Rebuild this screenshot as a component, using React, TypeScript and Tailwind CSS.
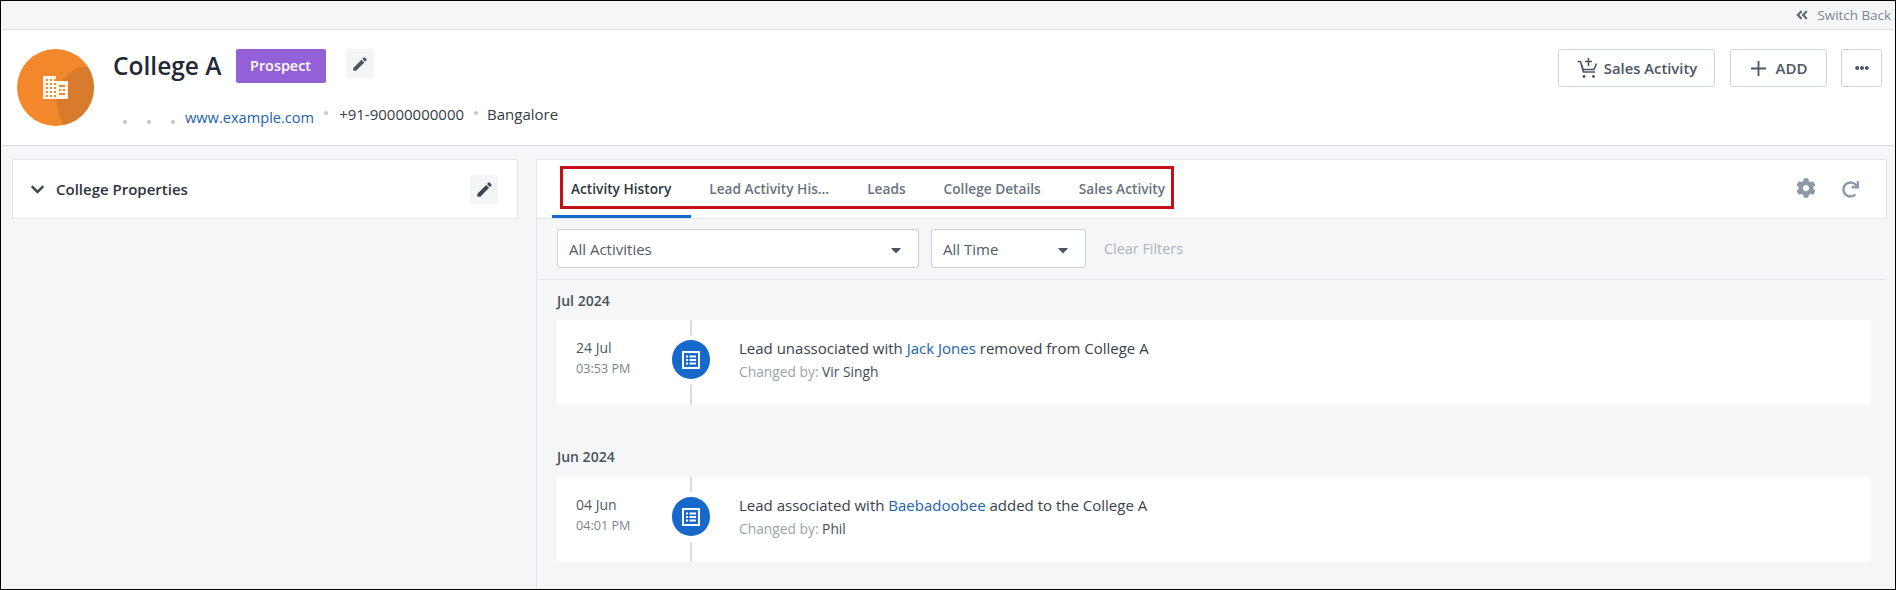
import React from "react";
import { FaAngleDoubleLeft, FaCaretDown, FaChevronDown, FaCog, FaEllipsisH, FaRedo } from "react-icons/fa";
import { MdEdit } from "react-icons/md";

function Avatar() {
  return (
    <svg width="77" height="77" viewBox="0 0 77 77" className="shrink-0">
      <defs>
        <clipPath id="av"><circle cx="38.5" cy="38.5" r="38.5" /></clipPath>
      </defs>
      <circle cx="38.5" cy="38.5" r="38.5" fill="#f2882b" />
      <g clipPath="url(#av)">
        <path d="M62 18 C50 24 42 32 40 44 C38 56 42 68 48 80 L80 80 L80 18 Z" fill="#d97b2c" />
      </g>
      <path d="M26 27 H39 V32 H51 V50 H26 Z" fill="#fff8ef" />
      <g fill="#f2882b">
        {[29, 33, 37].map((x) =>
          [30, 34, 38, 42, 46].map((y) => <rect key={`${x}-${y}`} x={x} y={y} width="2" height="2" />)
        )}
        <rect x="42" y="36" width="6" height="2" />
        <rect x="42" y="40" width="2" height="2" />
        <rect x="46" y="40" width="2" height="2" />
        <rect x="42" y="44" width="6" height="2" />
      </g>
    </svg>
  );
}

function CartPlus() {
  return (
    <svg width="23" height="22" viewBox="0 0 22 22" fill="none" stroke="#4b5563" strokeWidth="1.6">
      <path d="M1 4.5 H4 L7 15 H18.5" />
      <path d="M5 8 L6.5 12.5 H17.5 L20 6.5" />
      <path d="M12 1 V9 M8.5 4.5 H15.5" />
      <circle cx="7.5" cy="19.5" r="1.4" fill="#4b5563" stroke="none" />
      <circle cx="17" cy="19.5" r="1.4" fill="#4b5563" stroke="none" />
    </svg>
  );
}

function ListIcon() {
  return (
    <svg width="18" height="18" viewBox="0 0 18 18" fill="none">
      <rect x="1" y="1" width="16" height="16" stroke="#fff" strokeWidth="2" />
      <g fill="#fff">
        <rect x="4" y="4.5" width="2" height="2" />
        <rect x="7.5" y="4.5" width="6.5" height="2" />
        <rect x="4" y="8" width="2" height="2" />
        <rect x="7.5" y="8" width="6.5" height="2" />
        <rect x="4" y="11.5" width="2" height="2" />
        <rect x="7.5" y="11.5" width="6.5" height="2" />
      </g>
    </svg>
  );
}

function Tab({ label, active, className }: { label: string; active?: boolean; className: string }) {
  return (
    <span className={`text-[13.7px] font-semibold whitespace-nowrap ${active ? "text-[#2c3541]" : "text-[#68737f]"} ${className}`}>
      {label}
    </span>
  );
}

function Entry({
  day,
  time,
  before,
  link,
  after,
  by,
}: {
  day: string;
  time: string;
  before: string;
  link: string;
  after: string;
  by: string;
}) {
  return (
    <div className="flex h-[85px] mr-[16px] ml-[20px] bg-white shrink-0">
      <div className="w-[115px] pl-[19px] pt-[18px] text-[#4f5964]">
        <div className="h-[20px] leading-[20px] text-[14px]">{day}</div>
        <div className="h-[20px] mt-[1px] leading-[20px] text-[12.6px] text-[#7a848e]">{time}</div>
      </div>
      <div className="w-[38px] flex flex-col items-center shrink-0">
        <div className="w-[2px] h-[15px] bg-[#d9dde1]" />
        <div className="w-[38px] h-[39px] mt-[5px] rounded-full bg-[#1668c9] flex items-center justify-center shrink-0">
          <ListIcon />
        </div>
        <div className="w-[2px] h-[20px] mt-[6px] bg-[#d9dde1]" />
      </div>
      <div className="ml-[29px] pt-[18px]">
        <div className="h-[20px] leading-[20px] text-[15px] text-[#39424c] whitespace-nowrap">
          {before} <span className="text-[#1b62ad]">{link}</span> {after}
        </div>
        <div className="h-[20px] mt-[4px] leading-[20px] text-[13.8px] text-[#9aa3ab] whitespace-nowrap">
          Changed by: <span className="text-[#454e58]">{by}</span>
        </div>
      </div>
    </div>
  );
}

export default function App() {
  return (
    <div
      className="w-[1896px] h-[590px] overflow-hidden border border-black bg-[#f4f6f8] flex flex-col text-[#2c3541]"
      style={{ fontFamily: '"Open Sans", "Noto Sans", sans-serif' }}
    >
      <div className="h-[29px] shrink-0 flex items-center justify-end pr-[4px] gap-[8px] border-b border-[#dfe3e7] text-[13.4px] text-[#7b8794]">
        <FaAngleDoubleLeft className="text-[14px] text-[#5e6a76]" />
        <span>Switch Back</span>
      </div>

      <div className="h-[116px] shrink-0 bg-white border-b border-[#d8dce0] flex justify-between pt-[19px] pl-[16px] pr-[13px]">
        <div className="flex">
          <Avatar />
          <div className="ml-[19px]">
            <div className="flex items-start">
              <span className="text-[24.5px] leading-[34px] font-semibold text-[#1f2937]">College A</span>
              <span className="ml-[14px] w-[90px] h-[34px] rounded-[2px] bg-[#9460d8] text-white text-[14.4px] font-semibold flex items-center justify-center">
                Prospect
              </span>
              <span className="ml-[20px] w-[28px] h-[29px] bg-[#f3f5f7] rounded-[2px] flex items-center justify-center text-[#4b5563] text-[18px]">
                <MdEdit />
              </span>
            </div>
            <div className="flex items-center mt-[21px] h-[20px] text-[15px] text-[#333c46]">
              <span className="w-[4px] h-[4px] ml-[10px] mt-[16px] rounded-full bg-[#c3c8cd]" />
              <span className="w-[4px] h-[4px] ml-[20px] mt-[16px] rounded-full bg-[#c3c8cd]" />
              <span className="w-[4px] h-[4px] ml-[20px] mt-[16px] rounded-full bg-[#c3c8cd]" />
              <span className="ml-[10px] mt-[7px] text-[14.6px] text-[#1b62ad]">www.example.com</span>
              <span className="w-[4px] h-[4px] ml-[10px] mb-[2px] rounded-full bg-[#c3c8cd]" />
              <span className="ml-[11px]">+91-90000000000</span>
              <span className="w-[4px] h-[4px] ml-[10px] mb-[2px] rounded-full bg-[#c3c8cd]" />
              <span className="ml-[9px]">Bangalore</span>
            </div>
          </div>
        </div>
        <div className="flex items-start">
          <span className="w-[157px] h-[38px] border border-[#ccd1d6] rounded-[3px] flex items-center justify-center gap-[5px] text-[14.8px] font-semibold text-[#4b5563]">
            <CartPlus />
            Sales Activity
          </span>
          <span className="ml-[15px] w-[97px] h-[38px] border border-[#ccd1d6] rounded-[3px] flex items-center justify-center gap-[9px] text-[15px] font-semibold text-[#4b5563]">
            <svg width="17" height="17" viewBox="0 0 16 16" stroke="#4b5563" strokeWidth="1.7">
              <path d="M8 1 V15 M1 8 H15" />
            </svg>
            ADD
          </span>
          <span className="ml-[14px] w-[41px] h-[38px] border border-[#ccd1d6] rounded-[3px] flex items-center justify-center text-[14px] text-[#4b5563]">
            <FaEllipsisH />
          </span>
        </div>
      </div>

      <div className="flex-1 flex pt-[13px] pl-[11px] pr-[8px] items-start">
        <div className="w-[506px] h-[60px] shrink-0 bg-white border border-[#e2e5e9] flex items-center justify-between pl-[17px] pr-[19px]">
          <div className="flex items-center">
            <FaChevronDown className="text-[15px] text-[#3d4650]" />
            <span className="ml-[11px] text-[15px] font-semibold text-[#2c3541]">College Properties</span>
          </div>
          <span className="w-[28px] h-[29px] bg-[#f3f5f7] rounded-[2px] flex items-center justify-center text-[#3d4650] text-[19px]">
            <MdEdit />
          </span>
        </div>

        <div className="ml-[18px] flex-1 h-[429px] flex flex-col border-l border-[#e2e5e9]">
          <div className="h-[60px] shrink-0 bg-white border border-l-0 border-[#e2e5e9] flex items-start justify-between pl-[15px]">
            <div className="flex flex-col">
              <div className="flex items-center h-[55px]">
                <span className="flex items-center h-[43px] border-[3px] border-[#c40f17] ml-[8px] pl-[8px] pr-[6px] pt-[3px]">
                  <Tab label="Activity History" active className="" />
                  <Tab label="Lead Activity His..." className="ml-[38px]" />
                  <Tab label="Leads" className="ml-[38px]" />
                  <Tab label="College Details" className="ml-[38px]" />
                  <Tab label="Sales Activity" className="ml-[38px]" />
                </span>
              </div>
              <div className="w-[139px] h-[3px] bg-[#1668c9]" />
            </div>
            <div className="flex items-center gap-[26px] mt-[18px] pr-[27px] text-[#8c98a4]">
              <FaCog className="text-[20px]" />
              <FaRedo className="text-[17px] mt-[2px]" />
            </div>
          </div>

          <div className="h-[61px] shrink-0 border-b border-[#e2e5e9] flex items-center pl-[20px] pb-[1px]">
            <div className="w-[362px] h-[39px] bg-white border border-[#ccd1d6] rounded-[2px] flex items-center justify-between pl-[11px] pr-[14px] pt-[2px] text-[15px] text-[#515b66]">
              All Activities
              <FaCaretDown className="text-[16px] text-[#4b5563]" />
            </div>
            <div className="ml-[12px] w-[155px] h-[39px] bg-white border border-[#ccd1d6] rounded-[2px] flex items-center justify-between pl-[11px] pr-[14px] pt-[2px] text-[15px] text-[#515b66]">
              All Time
              <FaCaretDown className="text-[16px] text-[#4b5563]" />
            </div>
            <span className="ml-[18px] text-[14.4px] text-[#acb4bb]">Clear Filters</span>
          </div>

          <div className="pl-[20px] h-[40px] pt-[11px] text-[14px] font-semibold text-[#47515b] leading-[20px] shrink-0">Jul 2024</div>
          <Entry
            day="24 Jul"
            time="03:53 PM"
            before="Lead unassociated with"
            link="Jack Jones"
            after="removed from College A"
            by="Vir Singh"
          />
          <div className="pl-[20px] h-[72px] pt-[42px] text-[14px] font-semibold text-[#47515b] leading-[20px] shrink-0">Jun 2024</div>
          <Entry
            day="04 Jun"
            time="04:01 PM"
            before="Lead associated with"
            link="Baebadoobee"
            after="added to the College A"
            by="Phil"
          />
        </div>
      </div>
    </div>
  );
}
